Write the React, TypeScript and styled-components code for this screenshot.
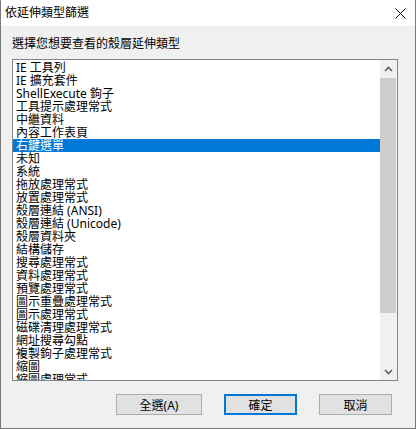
import React, { useState } from 'react';
import styled, { createGlobalStyle } from 'styled-components';

const GlobalStyle = createGlobalStyle`
  html, body {
    margin: 0;
    padding: 0;
    background: #ffffff;
  }
  body {
    font-family: "Noto Sans", "Noto Sans CJK TC", sans-serif;
    font-size: 12px;
    color: #000;
  }
`;

const Window = styled.div`
  width: 416px;
  height: 429px;
  box-sizing: border-box;
  display: flex;
  flex-direction: column;
  border-left: 1px solid #7a7a7a;
  border-right: 1px solid #7a7a7a;
  border-bottom: 1px solid #7a7a7a;
  background: #f0f0f0;
`;

const TitleBar = styled.div`
  height: 26px;
  flex: none;
  background: #ffffff;
  display: flex;
  align-items: center;
  justify-content: space-between;
  padding: 0 9px 0 4px;
`;

const Title = styled.span`
  font-size: 12px;
  line-height: 14px;
  color: #000;
`;

const CloseButton = styled.button`
  width: 12px;
  height: 12px;
  padding: 0;
  border: none;
  background: transparent;
  display: flex;
  align-items: center;
  justify-content: center;
  cursor: pointer;
`;

const Body = styled.div`
  flex: 1;
  display: flex;
  flex-direction: column;
  padding: 10px 0 0 11px;
`;

const Prompt = styled.div`
  height: 16px;
  line-height: 16px;
  margin-bottom: 7px;
`;

const ListBox = styled.div`
  width: 386px;
  height: 322px;
  box-sizing: border-box;
  border: 1px solid #828790;
  background: #ffffff;
  display: flex;
`;

const Items = styled.div`
  flex: 1;
  overflow: hidden;
  padding-top: 1px;
`;

const Item = styled.div<{ $selected?: boolean }>`
  height: 13px;
  line-height: 13px;
  padding-left: 3px;
  white-space: nowrap;
  cursor: default;
  background: ${(p) => (p.$selected ? '#0078d7' : 'transparent')};
  color: ${(p) => (p.$selected ? '#ffffff' : '#000000')};
`;

const ScrollBar = styled.div`
  width: 17px;
  flex: none;
  background: #f0f0f0;
  display: flex;
  flex-direction: column;
`;

const ArrowButton = styled.div`
  height: 17px;
  flex: none;
  display: flex;
  align-items: center;
  justify-content: center;
`;

const Track = styled.div`
  flex: 1;
  display: flex;
  flex-direction: column;
`;

const Thumb = styled.div`
  height: 235px;
  margin: 1px 1px 0 0;
  background: #cdcdcd;
`;

const ButtonRow = styled.div`
  display: flex;
  justify-content: flex-end;
  gap: 22px;
  margin-top: 13px;
  padding-right: 23px;
`;

const DialogButton = styled.button<{ $width: number; $default?: boolean }>`
  width: ${(p) => p.$width}px;
  height: 21px;
  box-sizing: border-box;
  padding: 0;
  font-family: inherit;
  font-size: 12px;
  color: #000;
  background: #e1e1e1;
  border: ${(p) => (p.$default ? '2px solid #0078d7' : '1px solid #adadad')};
  cursor: pointer;
`;

const items = [
  'IE 工具列',
  'IE 擴充套件',
  'ShellExecute 鉤子',
  '工具提示處理常式',
  '中繼資料',
  '內容工作表頁',
  '右鍵選單',
  '未知',
  '系統',
  '拖放處理常式',
  '放置處理常式',
  '殼層連結 (ANSI)',
  '殼層連結 (Unicode)',
  '殼層資料夾',
  '結構儲存',
  '搜尋處理常式',
  '資料處理常式',
  '預覽處理常式',
  '圖示重疊處理常式',
  '圖示處理常式',
  '磁碟清理處理常式',
  '網址搜尋勾點',
  '複製鉤子處理常式',
  '縮圖',
  '縮圖處理常式',
];

function App() {
  const [selected, setSelected] = useState(6);

  return (
    <>
      <GlobalStyle />
      <Window>
        <TitleBar>
          <Title>依延伸類型篩選</Title>
          <CloseButton aria-label="關閉">
            <svg width="11" height="11" viewBox="0 0 11 11">
              <path d="M0.5 0.5 L10.5 10.5 M10.5 0.5 L0.5 10.5" stroke="#111" strokeWidth="1" fill="none" />
            </svg>
          </CloseButton>
        </TitleBar>
        <Body>
          <Prompt>選擇您想要查看的殼層延伸類型</Prompt>
          <ListBox>
            <Items>
              {items.map((label, i) => (
                <Item key={label} $selected={i === selected} onClick={() => setSelected(i)}>
                  {label}
                </Item>
              ))}
            </Items>
            <ScrollBar>
              <ArrowButton>
                <svg width="9" height="6" viewBox="0 0 9 6">
                  <path d="M1 5 L4.5 1.5 L8 5" stroke="#606060" strokeWidth="1.6" fill="none" />
                </svg>
              </ArrowButton>
              <Track>
                <Thumb />
              </Track>
              <ArrowButton>
                <svg width="9" height="6" viewBox="0 0 9 6">
                  <path d="M1 1 L4.5 4.5 L8 1" stroke="#606060" strokeWidth="1.6" fill="none" />
                </svg>
              </ArrowButton>
            </ScrollBar>
          </ListBox>
          <ButtonRow>
            <DialogButton $width={86}>全選(A)</DialogButton>
            <DialogButton $width={73} $default>確定</DialogButton>
            <DialogButton $width={73}>取消</DialogButton>
          </ButtonRow>
        </Body>
      </Window>
    </>
  );
}

export default App;
